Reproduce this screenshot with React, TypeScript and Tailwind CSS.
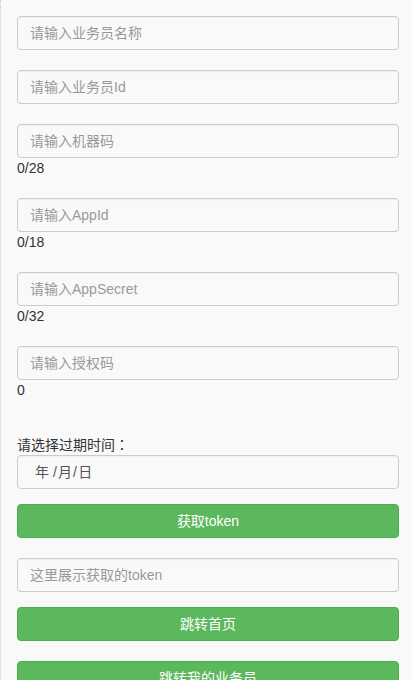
import { useState } from 'react';

const fieldClass =
  'block h-[34px] w-full rounded border border-[#cccccc] bg-transparent px-3 text-sm leading-5 text-[#555555] shadow-[inset_0_1px_1px_rgba(0,0,0,0.04)] outline-none placeholder:text-[#999999] placeholder:opacity-100 focus:border-[#66afe9]';

type FieldProps = {
  label: string;
  limit?: number;
  counted?: boolean;
};

function Field({ label, limit, counted = false }: FieldProps) {
  const [value, setValue] = useState('');
  return (
    <div>
      <input
        type="text"
        aria-label={label}
        placeholder={label}
        maxLength={limit}
        value={value}
        onChange={(event) => setValue(event.target.value)}
        className={fieldClass}
      />
      {counted && (
        <p>{limit ? `${value.length}/${limit}` : value.length}</p>
      )}
    </div>
  );
}

function ActionButton({ children }: { children: string }) {
  return (
    <button
      type="button"
      className="block h-[34px] w-full cursor-pointer rounded border border-[#4cae4c] bg-[#5cb85c] px-3 text-center text-sm leading-5 text-white hover:bg-[#449d44]"
    >
      {children}
    </button>
  );
}

export default function App() {
  return (
    <main className="h-screen overflow-x-hidden overflow-y-auto border-l border-dotted border-[#cccccc] bg-[#f9f9f9] py-4 pr-[13px] pl-4 font-['Liberation_Sans','Noto_Sans_CJK_SC',sans-serif] text-sm leading-5 text-[#333333] [scrollbar-width:none]">
      <form>
        <div className="flex flex-col gap-5">
          <Field label="请输入业务员名称" />
          <Field label="请输入业务员Id" />
          <Field label="请输入机器码" limit={28} counted />
          <Field label="请输入AppId" limit={18} counted />
          <Field label="请输入AppSecret" limit={32} counted />
          <Field label="请输入授权码" counted />
        </div>

        <div className="mt-[35px] mb-[15px]">
          <label htmlFor="expires" className="block">
            请选择过期时间
            <span className="font-['Noto_Sans_CJK_TC',sans-serif] leading-none">：</span>
          </label>
          <input
            id="expires"
            type="text"
            placeholder={'年 /\u200A月\u200A/\u200A日'}
            className="block h-[34px] w-full rounded border border-[#cccccc] bg-transparent pr-3 pl-[17px] text-sm leading-5 text-[#555555] shadow-[inset_0_1px_1px_rgba(0,0,0,0.04)] outline-none placeholder:text-[#555555] placeholder:opacity-100 focus:border-[#66afe9]"
          />
        </div>

        <ActionButton>获取token</ActionButton>
        <div className="mt-5 mb-[15px]">
          <Field label="这里展示获取的token" />
        </div>
        <div className="flex flex-col gap-5">
          <ActionButton>跳转首页</ActionButton>
          <ActionButton>跳转我的业务员</ActionButton>
        </div>
      </form>
    </main>
  );
}
